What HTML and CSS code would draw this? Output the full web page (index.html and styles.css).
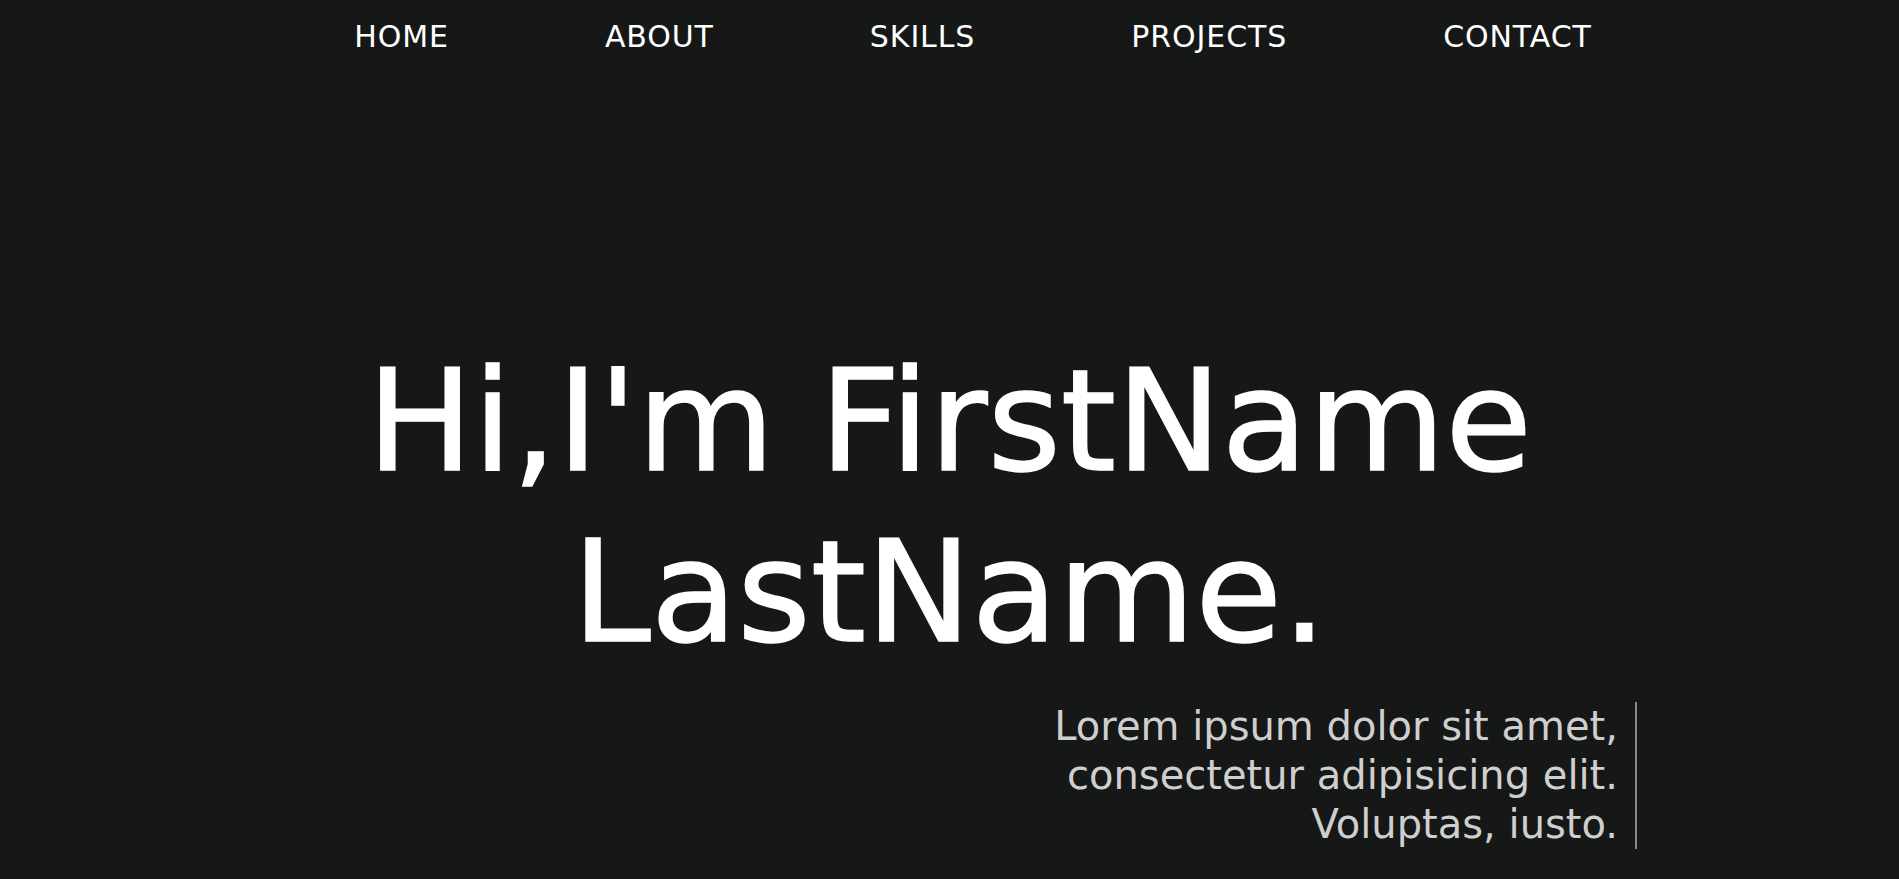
FILE: index.html
```html
<!DOCTYPE html>
<html lang="en">
<head>
<meta charset="utf-8">
<title>Portfolio</title>
<link rel="stylesheet" href="styles.css">
</head>
<body>
<header class="site-header">
  <nav class="nav">
    <a class="nav-link" href="#home">HOME</a>
    <a class="nav-link" href="#about">ABOUT</a>
    <a class="nav-link" href="#skills">SKILLS</a>
    <a class="nav-link" href="#projects">PROJECTS</a>
    <a class="nav-link" href="#contact">CONTACT</a>
  </nav>
</header>
<main class="hero" id="home">
  <h1 class="hero-title">Hi,I'm FirstName<br>LastName.</h1>
  <p class="hero-intro">Lorem ipsum dolor sit amet, consectetur adipisicing elit. Voluptas, iusto.</p>
</main>
</body>
</html>
```
FILE: styles.css
```css
* {
  box-sizing: border-box;
}

html,
body {
  margin: 0;
  height: 100%;
}

body {
  background: #161817;
  color: #ffffff;
  font-family: "DejaVu Sans", "Open Sans", sans-serif;
  overflow: hidden;
}

.site-header {
  padding: 19px 0 0 47px;
}

.nav {
  display: flex;
  justify-content: center;
  gap: 156px;
}

.nav-link {
  color: #ffffff;
  text-decoration: none;
  font-size: 30px;
  line-height: 35px;
  letter-spacing: 0.9px;
}

.hero {
  display: flex;
  flex-direction: column;
  width: 1375px;
  margin: 282px auto 0;
}

.hero-title {
  margin: 0;
  font-size: 141px;
  line-height: 171px;
  font-weight: 400;
  text-align: center;
  color: #ffffff;
  -webkit-text-stroke: 1.5px #ffffff;
}

.hero-intro {
  align-self: flex-end;
  width: 603px;
  margin: 24px 0 0;
  padding-right: 17px;
  border-right: 2px solid #8a8a8a;
  font-size: 40px;
  line-height: 49px;
  text-align: right;
  color: #cfcfcf;
}
```
